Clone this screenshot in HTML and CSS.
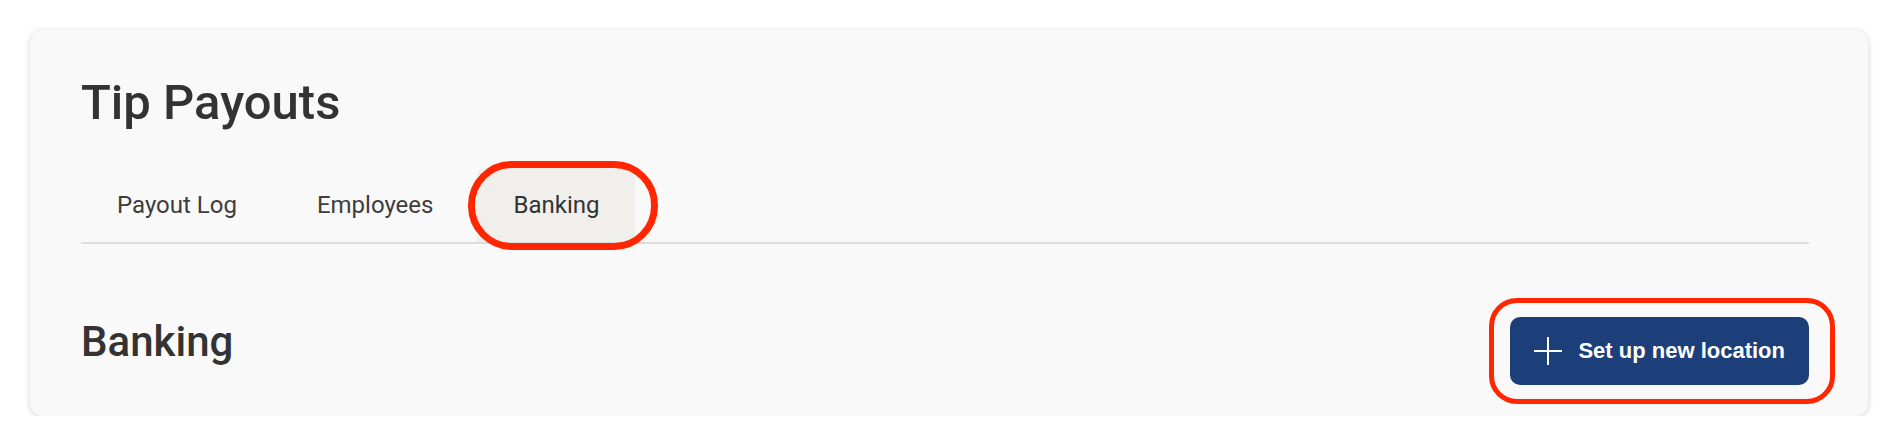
FILE: index.html
```html
<!DOCTYPE html>
<html lang="en">
<head>
    <meta charset="UTF-8">
    <meta name="viewport" content="width=device-width, initial-scale=1.0">
    <title>Tip Payouts</title>
    <link rel="stylesheet" href="styles.css">
</head>
<body>
    <div class="card">
        <h1 class="page-title">Tip Payouts</h1>

        <nav class="tabs">
            <a class="tab" href="#">Payout Log</a>
            <a class="tab" href="#">Employees</a>
            <a class="tab active" href="#">Banking<span class="ring ring-tab"></span></a>
        </nav>

        <div class="section-head">
            <h2 class="section-title">Banking</h2>
            <button class="btn-primary">
                <svg class="btn-icon" width="28" height="28" viewBox="0 0 28 28" aria-hidden="true">
                    <path d="M14 0v28M0 14h28" stroke="#fff" stroke-width="2" fill="none"/>
                </svg>
                <span>Set up new location</span>
                <span class="ring ring-btn"></span>
            </button>
        </div>
    </div>
</body>
</html>
```

FILE: styles.css
```css
/* Base */
body, html {
    margin: 0;
    padding: 0;
    background: #ffffff;
    font-family: Roboto, 'Liberation Sans', Arial, sans-serif;
    color: #333333;
}

/* Card */
.card {
    margin: 30px 30px 0 30px;
    padding: 43px 59px 31px 51px;
    background: #f9f9f9;
    border-radius: 13px;
    box-shadow: 0 1px 6px rgba(0, 0, 0, 0.18);
}

.page-title {
    margin: 0 0 35px 0;
    font-size: 49px;
    line-height: 60px;
    font-weight: 500;
    color: #333333;
}

/* Tabs */
.tabs {
    display: flex;
    gap: 8px;
    border-bottom: 2px solid #dddddd;
}

.tab {
    position: relative;
    display: block;
    height: 74px;
    line-height: 74px;
    padding: 0 36px;
    font-size: 24px;
    font-weight: 400;
    color: #3d3d3d;
    text-decoration: none;
    border-radius: 8px 8px 0 0;
}

.tab.active {
    background: #f0efec;
    color: #333333;
}

/* Section header */
.section-head {
    display: flex;
    justify-content: space-between;
    align-items: flex-start;
    margin-top: 73px;
}

.section-title {
    margin: 0;
    font-size: 42px;
    line-height: 50px;
    font-weight: 500;
    color: #333333;
}

.btn-primary {
    position: relative;
    display: flex;
    align-items: center;
    gap: 16px;
    height: 68px;
    padding: 0 24px;
    border: none;
    border-radius: 10px;
    background: #1c3f7a;
    color: #ffffff;
    font-family: 'Liberation Sans', Arial, sans-serif;
    font-size: 22px;
    font-weight: 700;
    cursor: pointer;
}

.btn-icon {
    display: block;
}

/* Red annotation rings */
.ring {
    position: absolute;
    border: 7px solid #ff2600;
    pointer-events: none;
}

.ring-tab {
    left: -9px;
    right: -23px;
    top: -7px;
    bottom: -8px;
    border-radius: 44px;
}

.ring-btn {
    left: -21px;
    right: -26px;
    top: -19px;
    bottom: -19px;
    border-width: 5px;
    border-radius: 28px;
}
```
